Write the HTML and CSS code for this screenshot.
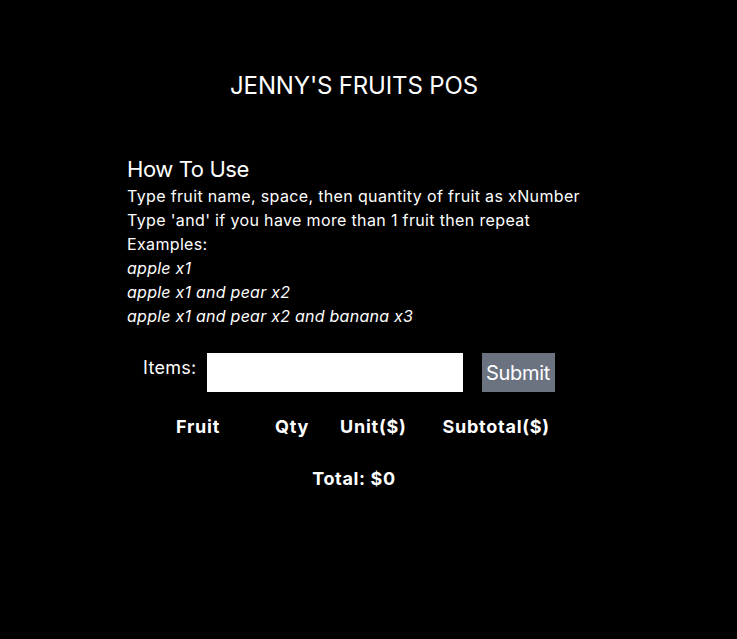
FILE: index.html
```html
<!DOCTYPE html>
<html>
<head>
<meta charset="utf-8">
<link rel="stylesheet" href="styles.css">
</head>
<body>
<div class="app">
  <h1 class="title">JENNY'S FRUITS POS</h1>
  <section class="howto">
    <h2 class="howto-title">How To Use</h2>
    <p class="line">Type fruit name, space, then quantity of fruit as xNumber</p>
    <p class="line">Type 'and' if you have more than 1 fruit then repeat</p>
    <p class="line">Examples:</p>
    <p class="line ex">apple x1</p>
    <p class="line ex">apple x1 and pear x2</p>
    <p class="line ex">apple x1 and pear x2 and banana x3</p>
  </section>
  <form class="items-row">
    <label class="items-label">Items:</label>
    <input class="items-input" type="text">
    <button class="submit" type="button">Submit</button>
  </form>
  <div class="table-head">
    <span class="col c-fruit">Fruit</span>
    <span class="col c-qty">Qty</span>
    <span class="col c-unit">Unit($)</span>
    <span class="col c-sub">Subtotal($)</span>
  </div>
  <div class="total">Total: $0</div>
</div>
</body>
</html>
```
FILE: styles.css
```css
html, body {
  margin: 0;
  padding: 0;
  background: #000;
  color: #fff;
  font-family: Inter, "Noto Sans", sans-serif;
}
.app {
  width: 454px;
  margin-left: 127px;
  padding-top: 70px;
}
.title {
  margin: 0;
  font-size: 24px;
  font-weight: 400;
  text-align: center;
  line-height: 32px;
  letter-spacing: -0.15px;
}
.howto {
  margin-top: 52px;
}
.howto-title {
  margin: 0;
  font-size: 22px;
  font-weight: 400;
  line-height: 30px;
  letter-spacing: -0.4px;
}
.line {
  margin: 0;
  font-size: 16px;
  line-height: 24px;
  letter-spacing: 0.35px;
  white-space: nowrap;
}
.ex {
  font-style: italic;
  letter-spacing: 0.25px;
}
.items-row {
  display: flex;
  align-items: flex-start;
  margin: 25px 0 0 16px;
}
.items-label {
  font-size: 18px;
  line-height: 28px;
  margin-right: 10px;
  margin-top: 1px;
  letter-spacing: 0.3px;
}
.items-input {
  width: 256px;
  height: 39px;
  box-sizing: border-box;
  border: 0;
  background: #fff;
  margin: 0;
  padding: 0 8px;
}
.submit {
  margin-left: 19px;
  height: 39px;
  width: 73px;
  border: 0;
  padding: 0;
  background: #6b7280;
  color: #fff;
  font-family: Inter, sans-serif;
  font-size: 20px;
  letter-spacing: -0.3px;
}
.table-head {
  display: flex;
  margin: 23px 0 0 49px;
  font-weight: 700;
  font-size: 18px;
  line-height: 24px;
  letter-spacing: 0.75px;
}
.c-qty { margin-left: 55px; }
.c-unit { margin-left: 31px; }
.c-sub { margin-left: 36px; }
.total {
  margin-top: 28px;
  text-align: center;
  font-weight: 700;
  font-size: 18px;
  line-height: 24px;
  letter-spacing: 0.65px;
}
```
